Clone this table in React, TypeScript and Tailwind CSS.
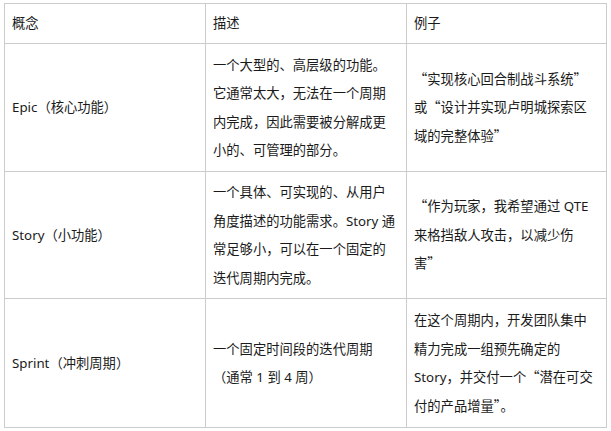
import React from "react";

const rows: { h: string; c: string[]; d: string[]; e: string[] }[] = [
  {
    h: "h-[128px]",
    c: ["Epic（核心功能）"],
    d: ["一个大型的、高层级的功能。", "它通常太大，无法在一个周期", "内完成，因此需要被分解成更", "小的、可管理的部分。"],
    e: ["“实现核心回合制战斗系统”", "或“设计并实现卢明城探索区", "域的完整体验”"],
  },
  {
    h: "h-[127px]",
    c: ["Story（小功能）"],
    d: ["一个具体、可实现的、从用户", "角度描述的功能需求。Story 通", "常足够小，可以在一个固定的", "迭代周期内完成。"],
    e: ["“作为玩家，我希望通过 QTE", "来格挡敌人攻击，以减少伤", "害”"],
  },
  {
    h: "h-[129px]",
    c: ["Sprint（冲刺周期）"],
    d: ["一个固定时间段的迭代周期", "（通常 1 到 4 周）"],
    e: ["在这个周期内，开发团队集中", "精力完成一组预先确定的", "Story，并交付一个“潜在可交", "付的产品增量”。"],
  },
];

function Line({ text }: { text: string }) {
  const parts = text.split(/([“”])/);
  return (
    <div>
      {parts.map((p, i) =>
        p === "“" || p === "”" ? (
          <span key={i} style={{ fontFamily: '"Noto Sans CJK SC", sans-serif' }}>
            {p}
          </span>
        ) : (
          <React.Fragment key={i}>{p}</React.Fragment>
        )
      )}
    </div>
  );
}

function Lines({ lines }: { lines: string[] }) {
  return (
    <>
      {lines.map((l, i) => (
        <Line key={i} text={l} />
      ))}
    </>
  );
}

export default function App() {
  return (
    <div className="w-[611px] h-[431px] bg-white pt-[3px] pl-[4px] overflow-hidden">
      <table
        lang="zh-CN"
        className="border-collapse text-[13.3px] leading-[28.5px] text-[#1a1a1a] whitespace-nowrap table-fixed w-[602px]"
        style={{ fontFamily: '"Noto Sans", "Noto Sans CJK SC", sans-serif' }}
      >
        <colgroup>
          <col className="w-[201px]" />
          <col className="w-[201px]" />
          <col className="w-[200px]" />
        </colgroup>
        <tbody>
          <tr className="h-[40px]">
            <td className="border border-[#cccccc] pl-[7px] align-middle">概念</td>
            <td className="border border-[#cccccc] pl-[7px] align-middle">描述</td>
            <td className="border border-[#cccccc] pl-[7px] align-middle">例子</td>
          </tr>
          {rows.map((r, i) => (
            <tr key={i} className={r.h}>
              <td className="border border-[#cccccc] pl-[7px] align-middle">
                <Lines lines={r.c} />
              </td>
              <td className="border border-[#cccccc] pl-[7px] align-middle">
                <Lines lines={r.d} />
              </td>
              <td className="border border-[#cccccc] pl-[7px] align-middle">
                <Lines lines={r.e} />
              </td>
            </tr>
          ))}
        </tbody>
      </table>
    </div>
  );
}
